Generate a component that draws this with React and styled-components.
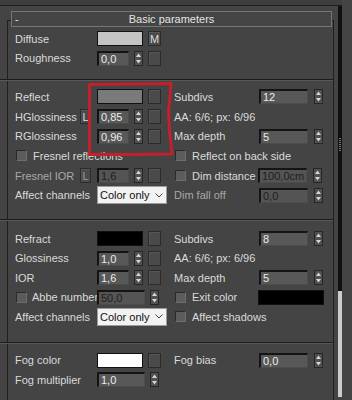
import React from 'react';
import styled, { createGlobalStyle } from 'styled-components';

const GlobalStyle = createGlobalStyle`
  html, body {
    margin: 0;
    padding: 0;
    background: #444444;
  }
  body {
    font-family: 'Liberation Sans', Arial, sans-serif;
    font-size: 11px;
    color: #dadada;
  }
`;

const Screen = styled.div`
  position: relative;
  width: 352px;
  height: 400px;
  overflow: hidden;
  background: #444444;
  display: flex;
  flex-direction: column;
`;

const TopBar = styled.div`
  height: 5px;
  width: 342px;
  background: #3e3e3e;
  border-bottom: 1px solid #1e1e1e;
  flex: none;
`;

const Frame = styled.div`
  flex: 1;
  display: flex;
  min-height: 0;
`;

const Panel = styled.div`
  width: 338px;
  flex: none;
  padding-top: 5px;
`;

const ScrollBar = styled.div`
  width: 4px;
  flex: none;
  display: flex;
  flex-direction: column;
  margin-bottom: 3px;
`;

const Thumb = styled.div`
  height: 285px;
  background: #101010;
  display: flex;
  justify-content: center;
`;

const Grip = styled.div`
  margin-top: 132px;
  width: 2px;
  height: 14px;
  background: repeating-linear-gradient(#7a7a7a 0 1px, transparent 1px 2px);
`;

const Track = styled.div`
  flex: 1;
  background: #cdcdcd;
`;

const Header = styled.div`
  position: relative;
  box-sizing: border-box;
  height: 16px;
  margin: 0 6px 0 11px;
  border: 1px solid #767676;
  background: #454545;
  display: grid;
  grid-template-columns: 20px 1fr 20px;
  align-items: center;
  color: #e4e4e4;
`;

const Minus = styled.span`
  padding-left: 3px;
  line-height: 10px;
`;

const Title = styled.span`
  text-align: center;
  white-space: nowrap;
`;

const Body = styled.div`
  box-sizing: border-box;
  width: 327px;
  margin: -7px 0 0 7px;
  border: 1px solid #1f1f1f;
  border-bottom: none;
  height: 400px;
`;

const Section = styled.div`
  padding: ${(p) => p.$pt}px 0 ${(p) => p.$pb}px 7px;
`;

const Separator = styled.div`
  height: 0;
  margin-left: -8px;
  border-top: 1px solid #1c1c1c;
  border-bottom: 1px solid #585858;
`;

const Row = styled.div`
  display: flex;
  align-items: center;
  height: ${(p) => p.$h}px;
`;

const Left = styled.div`
  width: 159px;
  flex: none;
  display: flex;
  align-items: center;
`;

const Right = styled.div`
  flex: 1;
  display: flex;
  align-items: center;
`;

const Label = styled.span`
  width: ${(p) => p.$w ?? 65}px;
  flex: none;
  white-space: nowrap;
  color: ${(p) => (p.$dim ? '#a8a8a8' : '#dadada')};
`;

const LSlot = styled.span`
  width: 17px;
  flex: none;
  display: flex;
`;

const Controls = styled.div`
  display: flex;
  align-items: center;
  gap: ${(p) => p.$gap ?? 5}px;
`;

const Button = styled.span`
  box-sizing: border-box;
  width: ${(p) => p.$w ?? 13}px;
  height: 15px;
  flex: none;
  border: 1px solid #2b2b2b;
  background: #4a4a4a;
  box-shadow: inset 1px 1px 0 #565656;
  display: flex;
  align-items: center;
  justify-content: center;
  font-size: 11px;
  color: ${(p) => (p.$dim ? '#9a9a9a' : '#dcdcdc')};
`;

const Field = styled.span`
  box-sizing: border-box;
  width: ${(p) => p.$w}px;
  height: 15px;
  flex: none;
  background: ${(p) => (p.$dim ? '#545454' : '#585858')};
  border-style: solid;
  border-width: 2px 1px 1px 2px;
  border-color: #141414 #4c4c4c #4c4c4c #141414;
  padding-left: 2px;
  line-height: 12px;
  white-space: nowrap;
  overflow: hidden;
  color: ${(p) => (p.$dim ? '#1e1e1e' : '#ececec')};
`;

const Swatch = styled.span`
  box-sizing: border-box;
  width: ${(p) => p.$w ?? 46}px;
  height: 15px;
  flex: none;
  border: 1px solid #111111;
  background: ${(p) => p.$color};
`;

const SpinBox = styled.span`
  display: flex;
  flex: none;
  width: 9px;
  height: 15px;
`;

const Check = styled.span`
  display: flex;
  align-items: center;
  gap: ${(p) => p.$gap ?? 6}px;
  margin-left: 1px;
  width: ${(p) => p.$w}px;
  flex: none;
  white-space: nowrap;
  color: #dadada;
`;

const Box = styled.span`
  box-sizing: border-box;
  width: 11px;
  height: 11px;
  flex: none;
  background: #5c5c5c;
  border: 1px solid;
  border-color: #2a2a2a #6e6e6e #6e6e6e #2a2a2a;
`;

const Select = styled.span`
  box-sizing: border-box;
  width: 70px;
  height: 18px;
  flex: none;
  background: #f2f2f2;
  border: 1px solid #9c9c9c;
  display: flex;
  align-items: center;
  justify-content: space-between;
  padding: 0 3px 0 2px;
  color: #111111;
`;

const Highlight = styled.svg`
  position: absolute;
  left: 84px;
  top: 78px;
  pointer-events: none;
`;

const Spinner = () => (
  <SpinBox>
    <svg width="9" height="15" viewBox="0 0 9 15">
      <rect x="0.5" y="0.5" width="8" height="14" fill="#505050" stroke="#262626" />
      <path d="M4.5 2.5 L7 6 L2 6 Z" fill="#d6d6d6" />
      <path d="M2 9 L7 9 L4.5 12.5 Z" fill="#d6d6d6" />
    </svg>
  </SpinBox>
);

const Chevron = () => (
  <svg width="8" height="5" viewBox="0 0 8 5">
    <polyline points="0.5,0.5 4,4 7.5,0.5" fill="none" stroke="#444" strokeWidth="1" />
  </svg>
);

const Spin = ({ value, w = 32, dim, slot = true }) => (
  <Controls>
    <Field $w={w} $dim={dim}>{value}</Field>
    <Spinner />
    {slot && <Button />}
  </Controls>
);

const RightSpin = ({ label, value, dim }) => (
  <Right>
    <Label $w={85} $dim={dim}>{label}</Label>
    <Controls $gap={6}>
      <Field $w={49} $dim={dim}>{value}</Field>
      <Spinner />
    </Controls>
  </Right>
);

const Dropdown = () => (
  <Select>
    Color only
    <Chevron />
  </Select>
);

const App = () => (
  <>
    <GlobalStyle />
    <Screen>
      <TopBar />
      <Frame>
        <Panel>
          <Header>
            <Minus>-</Minus>
            <Title>Basic parameters</Title>
            <span />
          </Header>
          <Body>
            <Section $pt={8} $pb={11}>
              <Row $h={19.5}>
                <Left>
                  <Label>Diffuse</Label>
                  <LSlot />
                  <Controls>
                    <Swatch $color="#c4c4c4" />
                    <Button>M</Button>
                  </Controls>
                </Left>
              </Row>
              <Row $h={19.5}>
                <Left>
                  <Label>Roughness</Label>
                  <LSlot />
                  <Spin value="0,0" />
                </Left>
              </Row>
            </Section>
            <Separator />
            <Section $pt={6} $pb={14}>
              <Row $h={19.7}>
                <Left>
                  <Label>Reflect</Label>
                  <LSlot />
                  <Controls>
                    <Swatch $color="#7a7a7a" />
                    <Button />
                  </Controls>
                </Left>
                <RightSpin label="Subdivs" value="12" />
              </Row>
              <Row $h={19.7}>
                <Left>
                  <Label>HGlossiness</Label>
                  <LSlot>
                    <Button $w={11}>L</Button>
                  </LSlot>
                  <Spin value="0,85" />
                </Left>
                <Right>AA: 6/6; px: 6/96</Right>
              </Row>
              <Row $h={19.7}>
                <Left>
                  <Label>RGlossiness</Label>
                  <LSlot />
                  <Spin value="0,96" />
                </Left>
                <RightSpin label="Max depth" value="5" />
              </Row>
              <Row $h={19.7}>
                <Left>
                  <Check $w={140}>
                    <Box />
                    Fresnel reflections
                  </Check>
                </Left>
                <Right>
                  <Check $w={140}>
                    <Box />
                    Reflect on back side
                  </Check>
                </Right>
              </Row>
              <Row $h={19.7}>
                <Left>
                  <Label $dim>Fresnel IOR</Label>
                  <LSlot>
                    <Button $w={11} $dim>L</Button>
                  </LSlot>
                  <Spin value="1,6" dim />
                </Left>
                <Right>
                  <Check $w={83}>
                    <Box />
                    Dim distance
                  </Check>
                  <Controls $gap={6}>
                    <Field $w={49} $dim>100,0cm</Field>
                    <Spinner />
                  </Controls>
                </Right>
              </Row>
              <Row $h={19.7}>
                <Left>
                  <Label $w={82}>Affect channels</Label>
                  <Dropdown />
                </Left>
                <RightSpin label="Dim fall off" value="0,0" dim />
              </Row>
            </Section>
            <Separator />
            <Section $pt={8} $pb={15}>
              <Row $h={19.5}>
                <Left>
                  <Label>Refract</Label>
                  <LSlot />
                  <Controls>
                    <Swatch $color="#000000" />
                    <Button />
                  </Controls>
                </Left>
                <RightSpin label="Subdivs" value="8" />
              </Row>
              <Row $h={19.5}>
                <Left>
                  <Label>Glossiness</Label>
                  <LSlot />
                  <Spin value="1,0" />
                </Left>
                <Right>AA: 6/6; px: 6/96</Right>
              </Row>
              <Row $h={19.5}>
                <Left>
                  <Label>IOR</Label>
                  <LSlot />
                  <Spin value="1,6" />
                </Left>
                <RightSpin label="Max depth" value="5" />
              </Row>
              <Row $h={19.5}>
                <Left>
                  <Check $w={81} $gap={5}>
                    <Box />
                    Abbe number
                  </Check>
                  <Spin value="50,0" w={48} dim slot={false} />
                </Left>
                <Right>
                  <Check $w={83}>
                    <Box />
                    Exit color
                  </Check>
                  <Swatch $w={66} $color="#000000" />
                </Right>
              </Row>
              <Row $h={19.5}>
                <Left>
                  <Label $w={82}>Affect channels</Label>
                  <Dropdown />
                </Left>
                <Right>
                  <Check $w={140}>
                    <Box />
                    Affect shadows
                  </Check>
                </Right>
              </Row>
            </Section>
            <Separator />
            <Section $pt={7} $pb={0}>
              <Row $h={19.5}>
                <Left>
                  <Label>Fog color</Label>
                  <LSlot />
                  <Controls>
                    <Swatch $color="#ffffff" />
                    <Button />
                  </Controls>
                </Left>
                <RightSpin label="Fog bias" value="0,0" />
              </Row>
              <Row $h={19.5}>
                <Left>
                  <Label $w={82}>Fog multiplier</Label>
                  <Spin value="1,0" w={48} slot={false} />
                </Left>
              </Row>
            </Section>
          </Body>
        </Panel>
        <ScrollBar>
          <Thumb>
            <Grip />
          </Thumb>
          <Track />
        </ScrollBar>
      </Frame>
      <Highlight width="96" height="82" viewBox="84 78 96 82">
        <path
          d="M89.5 84.5 L171 83.5 L170 96 L168.5 112 L169.5 132 L171.5 148 L172 154 L130 154.5 L89.5 154.5 Z"
          fill="none"
          stroke="#c41f2b"
          strokeWidth="3"
          strokeLinejoin="round"
        />
      </Highlight>
    </Screen>
  </>
);

export default App;
